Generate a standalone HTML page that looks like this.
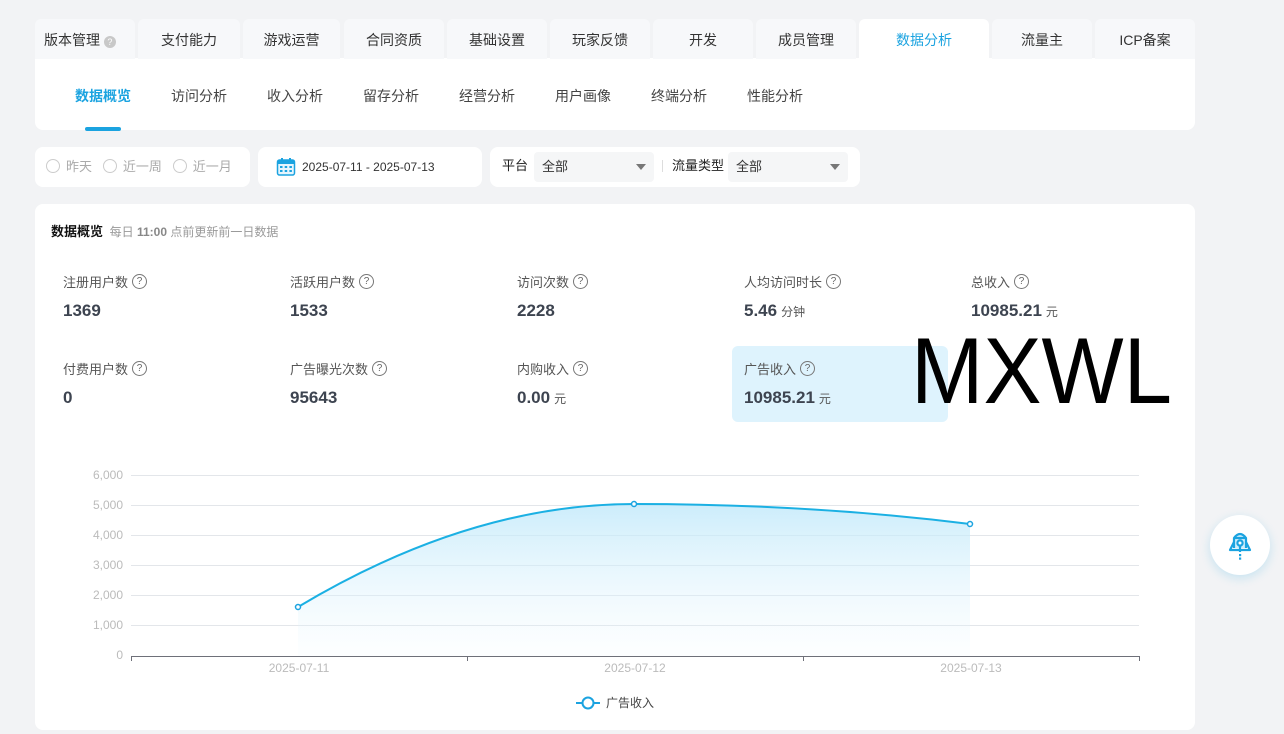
<!DOCTYPE html>
<html><head><meta charset="utf-8"><style>
*{margin:0;padding:0;box-sizing:border-box}
body{width:1284px;height:734px;background:#f2f3f5;font-family:"Liberation Sans","Noto Sans CJK SC",sans-serif;position:relative;overflow:hidden;color:#333}
.a{position:absolute}
.tab{position:absolute;top:19px;height:40px;background:#f7f8fa;border-radius:6px 6px 0 0;font-size:14px;color:#333;text-align:center;line-height:42px}
.card{position:absolute;background:#fff;border-radius:8px}
.sub{position:absolute;top:86px;font-size:14px;color:#444}
.lab{position:absolute;font-size:13px;color:#555;display:flex;align-items:center}
.q{display:inline-block;width:15px;height:15px;border:1px solid #777;border-radius:50%;font-size:10px;line-height:13px;text-align:center;color:#666;margin-left:4px}
.val{position:absolute;font-size:17px;font-weight:bold;color:#3d4450}
.val span{font-size:12px;font-weight:normal;color:#555;margin-left:4px}
.radio{display:inline-block;width:14px;height:14px;border:1px solid #ccc;border-radius:50%;vertical-align:-2px;margin-right:6px}
</style></head><body>
<div class="card" style="left:35px;top:58px;width:1160px;height:72px;border-radius:0 0 8px 8px"></div>
<div class="tab" style="left:35px;width:100px;text-align:left;padding-left:9px">版本管理 <span style="display:inline-block;width:12px;height:12px;border-radius:50%;background:#c8c8c8;color:#fff;font-size:9px;line-height:12px;text-align:center;vertical-align:0">?</span></div>
<div class="tab" style="left:138px;width:102px">支付能力</div>
<div class="tab" style="left:243px;width:97px">游戏运营</div>
<div class="tab" style="left:344px;width:100px">合同资质</div>
<div class="tab" style="left:447px;width:100px">基础设置</div>
<div class="tab" style="left:550px;width:100px">玩家反馈</div>
<div class="tab" style="left:653px;width:100px">开发</div>
<div class="tab" style="left:756px;width:100px">成员管理</div>
<div class="tab" style="left:859px;width:130px;background:#fff;color:#1ba3e0;height:41px">数据分析</div>
<div class="tab" style="left:992px;width:100px">流量主</div>
<div class="tab" style="left:1095px;width:100px">ICP备案</div>
<div class="sub" style="left:75px;color:#1ba3e0;font-weight:bold">数据概览</div>
<div class="a" style="left:85px;top:127px;width:36px;height:4px;background:#1ba3e0;border-radius:2px"></div>
<div class="sub" style="left:171px">访问分析</div>
<div class="sub" style="left:267px">收入分析</div>
<div class="sub" style="left:363px">留存分析</div>
<div class="sub" style="left:459px">经营分析</div>
<div class="sub" style="left:555px">用户画像</div>
<div class="sub" style="left:651px">终端分析</div>
<div class="sub" style="left:747px">性能分析</div>

<div class="card" style="left:35px;top:147px;width:215px;height:40px;font-size:13px;color:#aaa;line-height:40px;padding-left:11px;white-space:nowrap"><span class="radio"></span>昨天&nbsp;&nbsp;&nbsp;<span class="radio"></span>近一周&nbsp;&nbsp;&nbsp;<span class="radio"></span>近一月</div>
<div class="card" style="left:258px;top:147px;width:224px;height:40px;font-size:12px;color:#333;line-height:40px;padding-left:44px">2025-07-11 - 2025-07-13</div>
<svg class="a" style="left:276px;top:157px" width="20" height="20" viewBox="0 0 20 20"><rect x="1.5" y="3" width="17" height="15" rx="2" fill="#e6f5fd" stroke="#1ba3e0" stroke-width="1.5"/><rect x="1.5" y="3" width="17" height="4" fill="#1ba3e0"/><rect x="5" y="1" width="2" height="4" fill="#1ba3e0"/><rect x="13" y="1" width="2" height="4" fill="#1ba3e0"/><g fill="#1ba3e0"><rect x="4" y="9" width="2.5" height="2"/><rect x="8.7" y="9" width="2.5" height="2"/><rect x="13.4" y="9" width="2.5" height="2"/><rect x="4" y="13" width="2.5" height="2"/><rect x="8.7" y="13" width="2.5" height="2"/><rect x="13.4" y="13" width="2.5" height="2"/></g></svg>
<div class="card" style="left:490px;top:147px;width:370px;height:40px"></div>
<div class="a" style="left:502px;top:157px;font-size:13px;color:#222;line-height:18px">平台</div>
<div class="a" style="left:534px;top:152px;width:120px;height:30px;background:#f5f6f7;border-radius:4px;font-size:13px;line-height:30px;padding-left:8px;color:#333">全部</div>
<div class="a" style="left:636px;top:164px;border-left:5px solid transparent;border-right:5px solid transparent;border-top:6px solid #777"></div>
<div class="a" style="left:662px;top:160px;width:1px;height:12px;background:#ddd"></div>
<div class="a" style="left:672px;top:157px;font-size:13px;color:#222;line-height:18px">流量类型</div>
<div class="a" style="left:728px;top:152px;width:120px;height:30px;background:#f5f6f7;border-radius:4px;font-size:13px;line-height:30px;padding-left:8px;color:#333">全部</div>
<div class="a" style="left:830px;top:164px;border-left:5px solid transparent;border-right:5px solid transparent;border-top:6px solid #777"></div>

<div class="card" style="left:35px;top:204px;width:1160px;height:526px"></div>
<div class="a" style="left:51px;top:221px;font-size:13px;font-weight:bold;color:#111">数据概览 <span style="font-weight:normal;color:#999;font-size:12px;margin-left:3px">每日 <b style="color:#888">11:00</b> 点前更新前一日数据</span></div>
<div class="a" style="left:732px;top:346px;width:216px;height:76px;background:#def3fd;border-radius:6px"></div>

<div class="lab" style="left:63px;top:272px">注册用户数<span class="q">?</span></div><div class="val" style="left:63px;top:301px">1369</div>
<div class="lab" style="left:290px;top:272px">活跃用户数<span class="q">?</span></div><div class="val" style="left:290px;top:301px">1533</div>
<div class="lab" style="left:517px;top:272px">访问次数<span class="q">?</span></div><div class="val" style="left:517px;top:301px">2228</div>
<div class="lab" style="left:744px;top:272px">人均访问时长<span class="q">?</span></div><div class="val" style="left:744px;top:301px">5.46<span>分钟</span></div>
<div class="lab" style="left:971px;top:272px">总收入<span class="q">?</span></div><div class="val" style="left:971px;top:301px">10985.21<span>元</span></div>
<div class="lab" style="left:63px;top:359px">付费用户数<span class="q">?</span></div><div class="val" style="left:63px;top:388px">0</div>
<div class="lab" style="left:290px;top:359px">广告曝光次数<span class="q">?</span></div><div class="val" style="left:290px;top:388px">95643</div>
<div class="lab" style="left:517px;top:359px">内购收入<span class="q">?</span></div><div class="val" style="left:517px;top:388px">0.00<span>元</span></div>
<div class="lab" style="left:744px;top:359px">广告收入<span class="q">?</span></div><div class="val" style="left:744px;top:388px">10985.21<span>元</span></div>

<svg class="a" style="left:0;top:0" width="1284" height="734">
<defs><linearGradient id="g" x1="0" y1="0" x2="0" y2="1"><stop offset="0" stop-color="#bfe8fa" stop-opacity="0.8"/><stop offset="1" stop-color="#e8f7fe" stop-opacity="0.1"/></linearGradient></defs>
<g stroke="#e3e6ea" stroke-width="1">
<line x1="131" y1="475.5" x2="1139" y2="475.5"/><line x1="131" y1="505.5" x2="1139" y2="505.5"/><line x1="131" y1="535.5" x2="1139" y2="535.5"/><line x1="131" y1="565.5" x2="1139" y2="565.5"/><line x1="131" y1="595.5" x2="1139" y2="595.5"/><line x1="131" y1="625.5" x2="1139" y2="625.5"/></g>
<path d="M298,607 C410,540 522,504 634,504 C746,504 858,510 970,524 L970,656 L298,656 Z" fill="url(#g)"/>
<path d="M298,607 C410,540 522,504 634,504 C746,504 858,510 970,524" fill="none" stroke="#1bb0e3" stroke-width="2"/>
<g fill="#fff" stroke="#1ba3e0" stroke-width="1.5"><circle cx="298" cy="607" r="2.5"/><circle cx="634" cy="504" r="2.5"/><circle cx="970" cy="524" r="2.5"/></g>
<line x1="131" y1="656.5" x2="1139" y2="656.5" stroke="#6e7079"/>
<g stroke="#6e7079"><line x1="131.5" y1="656" x2="131.5" y2="661"/><line x1="467.5" y1="656" x2="467.5" y2="661"/><line x1="803.5" y1="656" x2="803.5" y2="661"/><line x1="1139.5" y1="656" x2="1139.5" y2="661"/></g>
<g font-family="Liberation Sans,sans-serif" font-size="12" fill="#bbb" text-anchor="end">
<text x="123" y="479">6,000</text><text x="123" y="509">5,000</text><text x="123" y="539">4,000</text><text x="123" y="569">3,000</text><text x="123" y="599">2,000</text><text x="123" y="629">1,000</text><text x="123" y="659">0</text></g>
<g font-family="Liberation Sans,sans-serif" font-size="12" fill="#bbb" text-anchor="middle"><text x="299" y="672">2025-07-11</text><text x="635" y="672">2025-07-12</text><text x="971" y="672">2025-07-13</text></g>
<line x1="576" y1="703" x2="600" y2="703" stroke="#1ba3e0" stroke-width="2"/><circle cx="588" cy="703" r="5.5" fill="#fff" stroke="#1ba3e0" stroke-width="2"/>
<text x="606" y="707" font-family="Liberation Sans,Noto Sans CJK SC,sans-serif" font-size="12" fill="#444">广告收入</text>
<text x="911" y="403" font-family="Liberation Sans,sans-serif" font-size="94" fill="#000" textLength="261" lengthAdjust="spacingAndGlyphs">MXWL</text>
</svg>

<div class="a" style="left:1210px;top:515px;width:60px;height:60px;border-radius:50%;background:#fff;box-shadow:0 3px 10px rgba(27,163,224,0.2)"></div>
<svg class="a" style="left:1226px;top:529px" width="28" height="32" viewBox="0 0 28 32"><g fill="none" stroke="#1ba3e0" stroke-width="2.2" stroke-linejoin="round"><path d="M8,19 L8,9 Q14,1 20,9 L20,19" fill="#cdeefc"/><line x1="8" y1="9" x2="20" y2="9"/><path d="M8,13 L4,21 L24,21 L20,13"/><circle cx="14" cy="14" r="2.6" fill="#fff"/><line x1="14" y1="16.6" x2="14" y2="23"/></g><rect x="13" y="25" width="2.2" height="2.2" fill="#1ba3e0"/><rect x="13" y="28.5" width="2.2" height="2.2" fill="#1ba3e0"/></svg>
</body></html>
